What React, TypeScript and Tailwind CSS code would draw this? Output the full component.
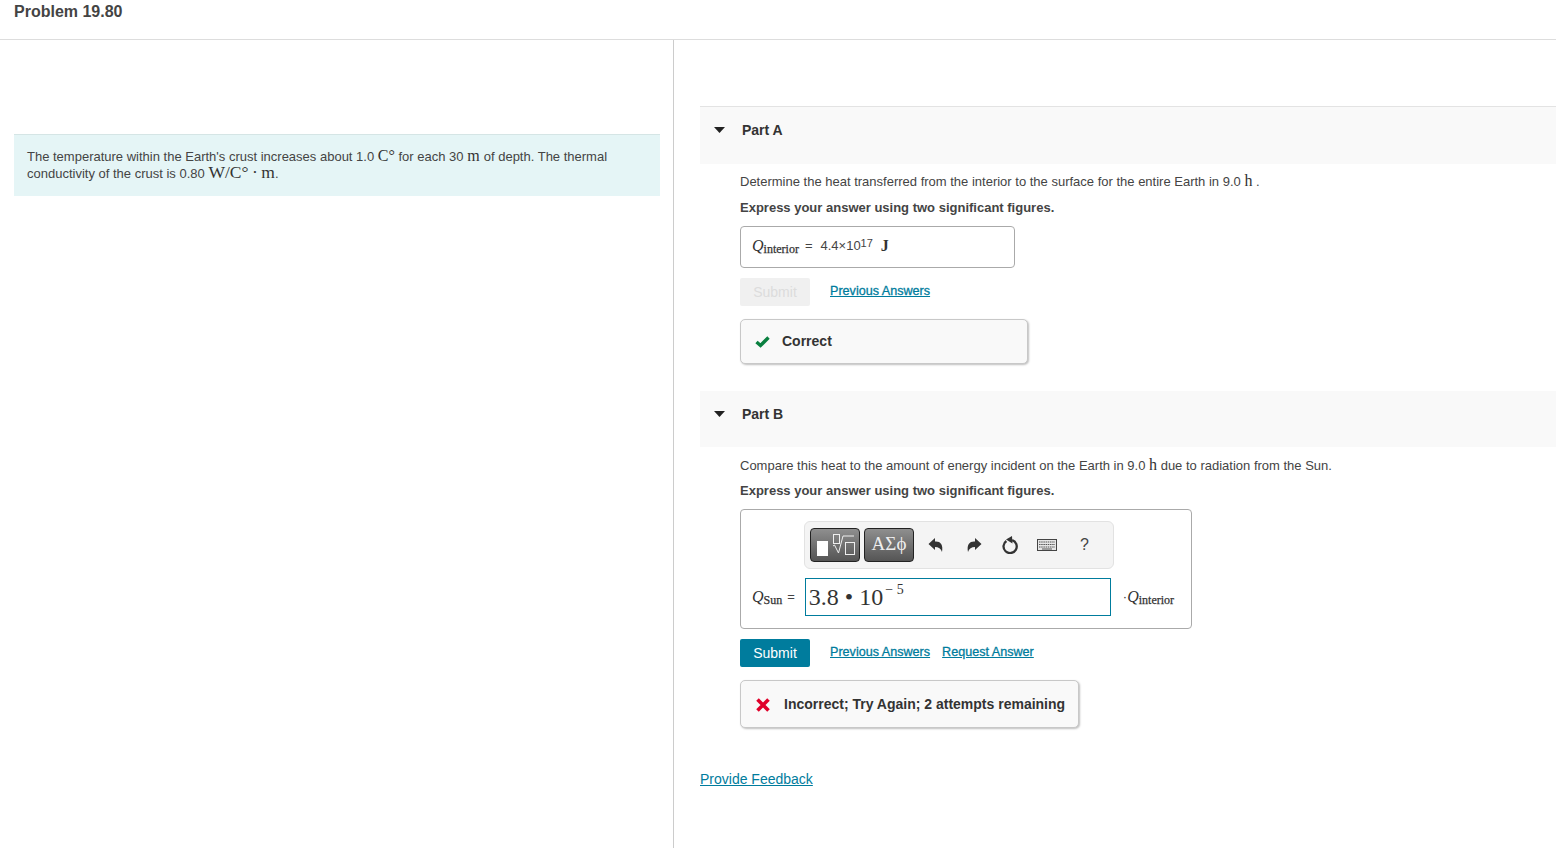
import React from "react";

const serif = "font-['Liberation_Serif',serif]";

function M({ children, className = "" }: { children: React.ReactNode; className?: string }) {
  return <span className={`${serif} text-[#333] leading-none ${className}`}>{children}</span>;
}

function Caret() {
  return (
    <svg width="11" height="6" viewBox="0 0 11 6" className="block">
      <path d="M0 0H11L5.5 6Z" fill="#222" />
    </svg>
  );
}

function PartHeader({ label, h }: { label: string; h: string }) {
  return (
    <div className={`flex items-start ${h} bg-[#f9f9f9] pt-[14px] pl-[14px]`}>
      <div className="w-[11px] pt-[6px]">
        <Caret />
      </div>
      <span className="ml-[17px] text-[14px] font-bold leading-[18px] text-[#333]">{label}</span>
    </div>
  );
}

function Link({ children }: { children: React.ReactNode }) {
  return (
    <a className="text-[12.6px] font-normal underline text-[#007c9d] leading-[14px] [-webkit-text-stroke:0.3px_#007c9d]">
      {children}
    </a>
  );
}

function Q({ sub }: { sub: string }) {
  return (
    <span className={`${serif} text-[#333] whitespace-nowrap leading-none`}>
      <i className="text-[16px]">Q</i>
      <span className="text-[12px] relative top-[2px] [-webkit-text-stroke:0.25px_#333]">{sub}</span>
    </span>
  );
}

function ToolBtn({ children }: { children: React.ReactNode }) {
  return (
    <div className="h-[34px] flex items-center justify-center rounded-[4px] border border-[#222] bg-gradient-to-b from-[#8f8f8f] to-[#555]">
      {children}
    </div>
  );
}

export default function App() {
  return (
    <div className="w-[1556px] h-[848px] overflow-hidden bg-white font-['Liberation_Sans',Arial,sans-serif] text-[#333] flex flex-col">
      <header className="h-[40px] border-b border-[#ddd] pl-[14px] pt-[3px] shrink-0">
        <h1 className="text-[16px] font-bold leading-[18px] text-[#444]">Problem 19.80</h1>
      </header>
      <div className="flex flex-1 min-h-0">
        <aside className="w-[674px] shrink-0 border-r border-[#ccc] pl-[14px] pt-[94px]">
          <div className="w-[646px] h-[62px] bg-[#e5f5f6] border-t border-[#d5e5e5] pl-[13px] pt-[13px] text-[13px] leading-[17px] text-[#444]">
            <p>
              The temperature within the Earth's crust increases about 1.0{" "}
              <M className="text-[16px]">C°</M> for each 30 <M className="text-[16px] tracking-[0.5px]">m</M> of depth. The thermal
            </p>
            <p className="-mt-[1px]">
              conductivity of the crust is 0.80 <M className="text-[17.5px]">W/C°{"\u2009"}·{"\u2009"}m</M>.
            </p>
          </div>
        </aside>
        <main className="flex-1 pl-[26px] pt-[66px] min-w-0">
          <section className="border-t border-[#e3e3e3]">
            <PartHeader label="Part A" h="h-[57px]" />
            <div className="pl-[40px]">
              <p className="mt-[8px] text-[13px] leading-[19px] text-[#444]">
                Determine the heat transferred from the interior to the surface for the entire Earth in 9.0{" "}
                <M className="text-[16px]">h</M> .
              </p>
              <p className="mt-[7px] text-[13px] font-bold leading-[19px] text-[#444]">
                Express your answer using two significant figures.
              </p>
              <div className="mt-[9px] w-[275px] h-[42px] rounded-[4px] border border-[#aaa] flex items-center pl-[11px] pb-[2px]">
                <Q sub="interior" />
                <span className="ml-[6px] text-[13px] text-[#444]">=</span>
                <span className="ml-[8px] text-[13px] text-[#444]">
                  4.4×10<sup className="text-[11px] -top-[3px] relative align-baseline">17</sup>
                </span>
                <M className="ml-[8px] text-[16px] font-bold">J</M>
              </div>
              <div className="mt-[10px] flex items-start">
                <button className="w-[70px] h-[28px] rounded-[2px] bg-[#f0f0f0] text-[14px] text-[#dcdcdc]">Submit</button>
                <div className="ml-[20px] mt-[6px] flex">
                  <Link>Previous Answers</Link>
                </div>
              </div>
              <div className="mt-[13px] w-[288px] h-[45px] rounded-[5px] border border-[#c8c8c8] bg-[#f9f9f9] shadow-[1px_1px_2px_rgba(0,0,0,0.25)] flex items-center pl-[14px]">
                <svg width="15" height="12" viewBox="0 0 15 12">
                  <path d="M1.5 6 5.5 9.5 13.5 1.5" fill="none" stroke="#0a8040" strokeWidth="3.4" />
                </svg>
                <span className="ml-[12px] text-[14px] font-bold text-[#333]">Correct</span>
              </div>
            </div>
          </section>
          <section className="mt-[27px]">
            <PartHeader label="Part B" h="h-[56px]" />
            <div className="pl-[40px]">
              <p className="mt-[9px] text-[13px] leading-[19px] text-[#444]">
                Compare this heat to the amount of energy incident on the Earth in 9.0{" "}
                <M className="text-[16px]">h</M> due to radiation from the Sun.
              </p>
              <p className="mt-[6px] text-[13px] font-bold leading-[19px] text-[#444]">
                Express your answer using two significant figures.
              </p>
              <div className="mt-[9px] w-[452px] h-[120px] rounded-[4px] border border-[#aaa] pt-[11px]">
                <div className="ml-[63px] w-[310px] h-[48px] rounded-[6px] border border-[#e2e2e2] bg-[#f4f4f4] flex items-center pl-[5px]">
                  <div className="w-[50px]">
                    <ToolBtn>
                      <svg width="44" height="28" viewBox="0 0 44 28">
                        <rect x="4" y="10" width="11" height="15" fill="#fff" />
                        <rect x="20.5" y="3.5" width="6" height="9" fill="none" stroke="#eee" strokeWidth="1" />
                        <path d="M20 15l1.5-1 4 8 4.5-17h11" fill="none" stroke="#eee" strokeWidth="1" />
                        <rect x="32.5" y="11.5" width="9" height="12" fill="none" stroke="#eee" strokeWidth="1" />
                      </svg>
                    </ToolBtn>
                  </div>
                  <div className="ml-[4px] w-[50px]">
                    <ToolBtn>
                      <span className={`${serif} text-[19px] text-[#eee] leading-none pb-[3px]`}>ΑΣϕ</span>
                    </ToolBtn>
                  </div>
                  <svg className="ml-[14px]" width="16" height="16" viewBox="0 0 16 16">
                    <path d="M0.5 7 7 1V4.5C12 4 15.5 7 14 15 13 11.5 10.5 10 7 10V13Z" fill="#333" />
                  </svg>
                  <svg className="ml-[22px]" width="16" height="16" viewBox="0 0 16 16">
                    <path d="M15.5 7 9 1V4.5C4 4 0.5 7 2 15 3 11.5 5.5 10 9 10V13Z" fill="#333" />
                  </svg>
                  <svg className="ml-[19px]" width="18" height="18" viewBox="0 0 18 18">
                    <path d="M5.4 5A6.6 6.6 0 1 0 11.2 4.2" fill="none" stroke="#333" strokeWidth="2.3" />
                    <path d="M11 0 11.5 7.5 5 3.5Z" fill="#333" />
                  </svg>
                  <svg className="ml-[18px]" width="20" height="12" viewBox="0 0 20 12">
                    <rect x="0.5" y="0.5" width="19" height="11" fill="#e6e6e6" stroke="#444" />
                    <path d="M2 3h16M2 5.5h16M2 8h16" stroke="#555" strokeWidth="1.2" strokeDasharray="1.5 0.7" />
                    <path d="M5 10h10" stroke="#555" />
                  </svg>
                  <span className="ml-[23px] text-[16px] text-[#444] leading-none">?</span>
                </div>
                <div className="mt-[9px] flex items-center pl-[11px]">
                  <Q sub="Sun" />
                  <span className="ml-[5px] text-[13px] text-[#444]">=</span>
                  <div className={`ml-[10px] w-[306px] h-[38px] border border-[#007c9d] flex items-center pl-[3px] ${serif} text-[#333]`}>
                    <span className="text-[24px] leading-none whitespace-nowrap">
                      3.8 • 10
                      <span className="relative -top-[11px] text-[14px] ml-[2px]">− 5</span>
                    </span>
                  </div>
                  <span className="ml-[12px] text-[13px] text-[#333]">·</span>
                  <Q sub="interior" />
                </div>
              </div>
              <div className="mt-[10px] flex items-start">
                <button className="w-[70px] h-[28px] rounded-[2px] bg-[#007c9d] text-[14px] text-white">Submit</button>
                <div className="ml-[20px] mt-[6px] flex gap-[12px]">
                  <Link>Previous Answers</Link>
                  <Link>Request Answer</Link>
                </div>
              </div>
              <div className="mt-[13px] w-[339px] h-[48px] rounded-[5px] border border-[#c8c8c8] bg-[#f9f9f9] shadow-[1px_1px_2px_rgba(0,0,0,0.25)] flex items-center pl-[15px] pt-[1px]">
                <svg width="14" height="14" viewBox="0 0 14 14">
                  <path d="M1.5 1.5 12.5 12.5M12.5 1.5 1.5 12.5" stroke="#e0002a" strokeWidth="3.6" />
                </svg>
                <span className="ml-[14px] text-[14px] font-bold text-[#333] whitespace-nowrap">
                  Incorrect; Try Again; 2 attempts remaining
                </span>
              </div>
            </div>
          </section>
          <a className="block mt-[42px] text-[14px] leading-[18px] underline text-[#007c9d]">Provide Feedback</a>
        </main>
      </div>
    </div>
  );
}
